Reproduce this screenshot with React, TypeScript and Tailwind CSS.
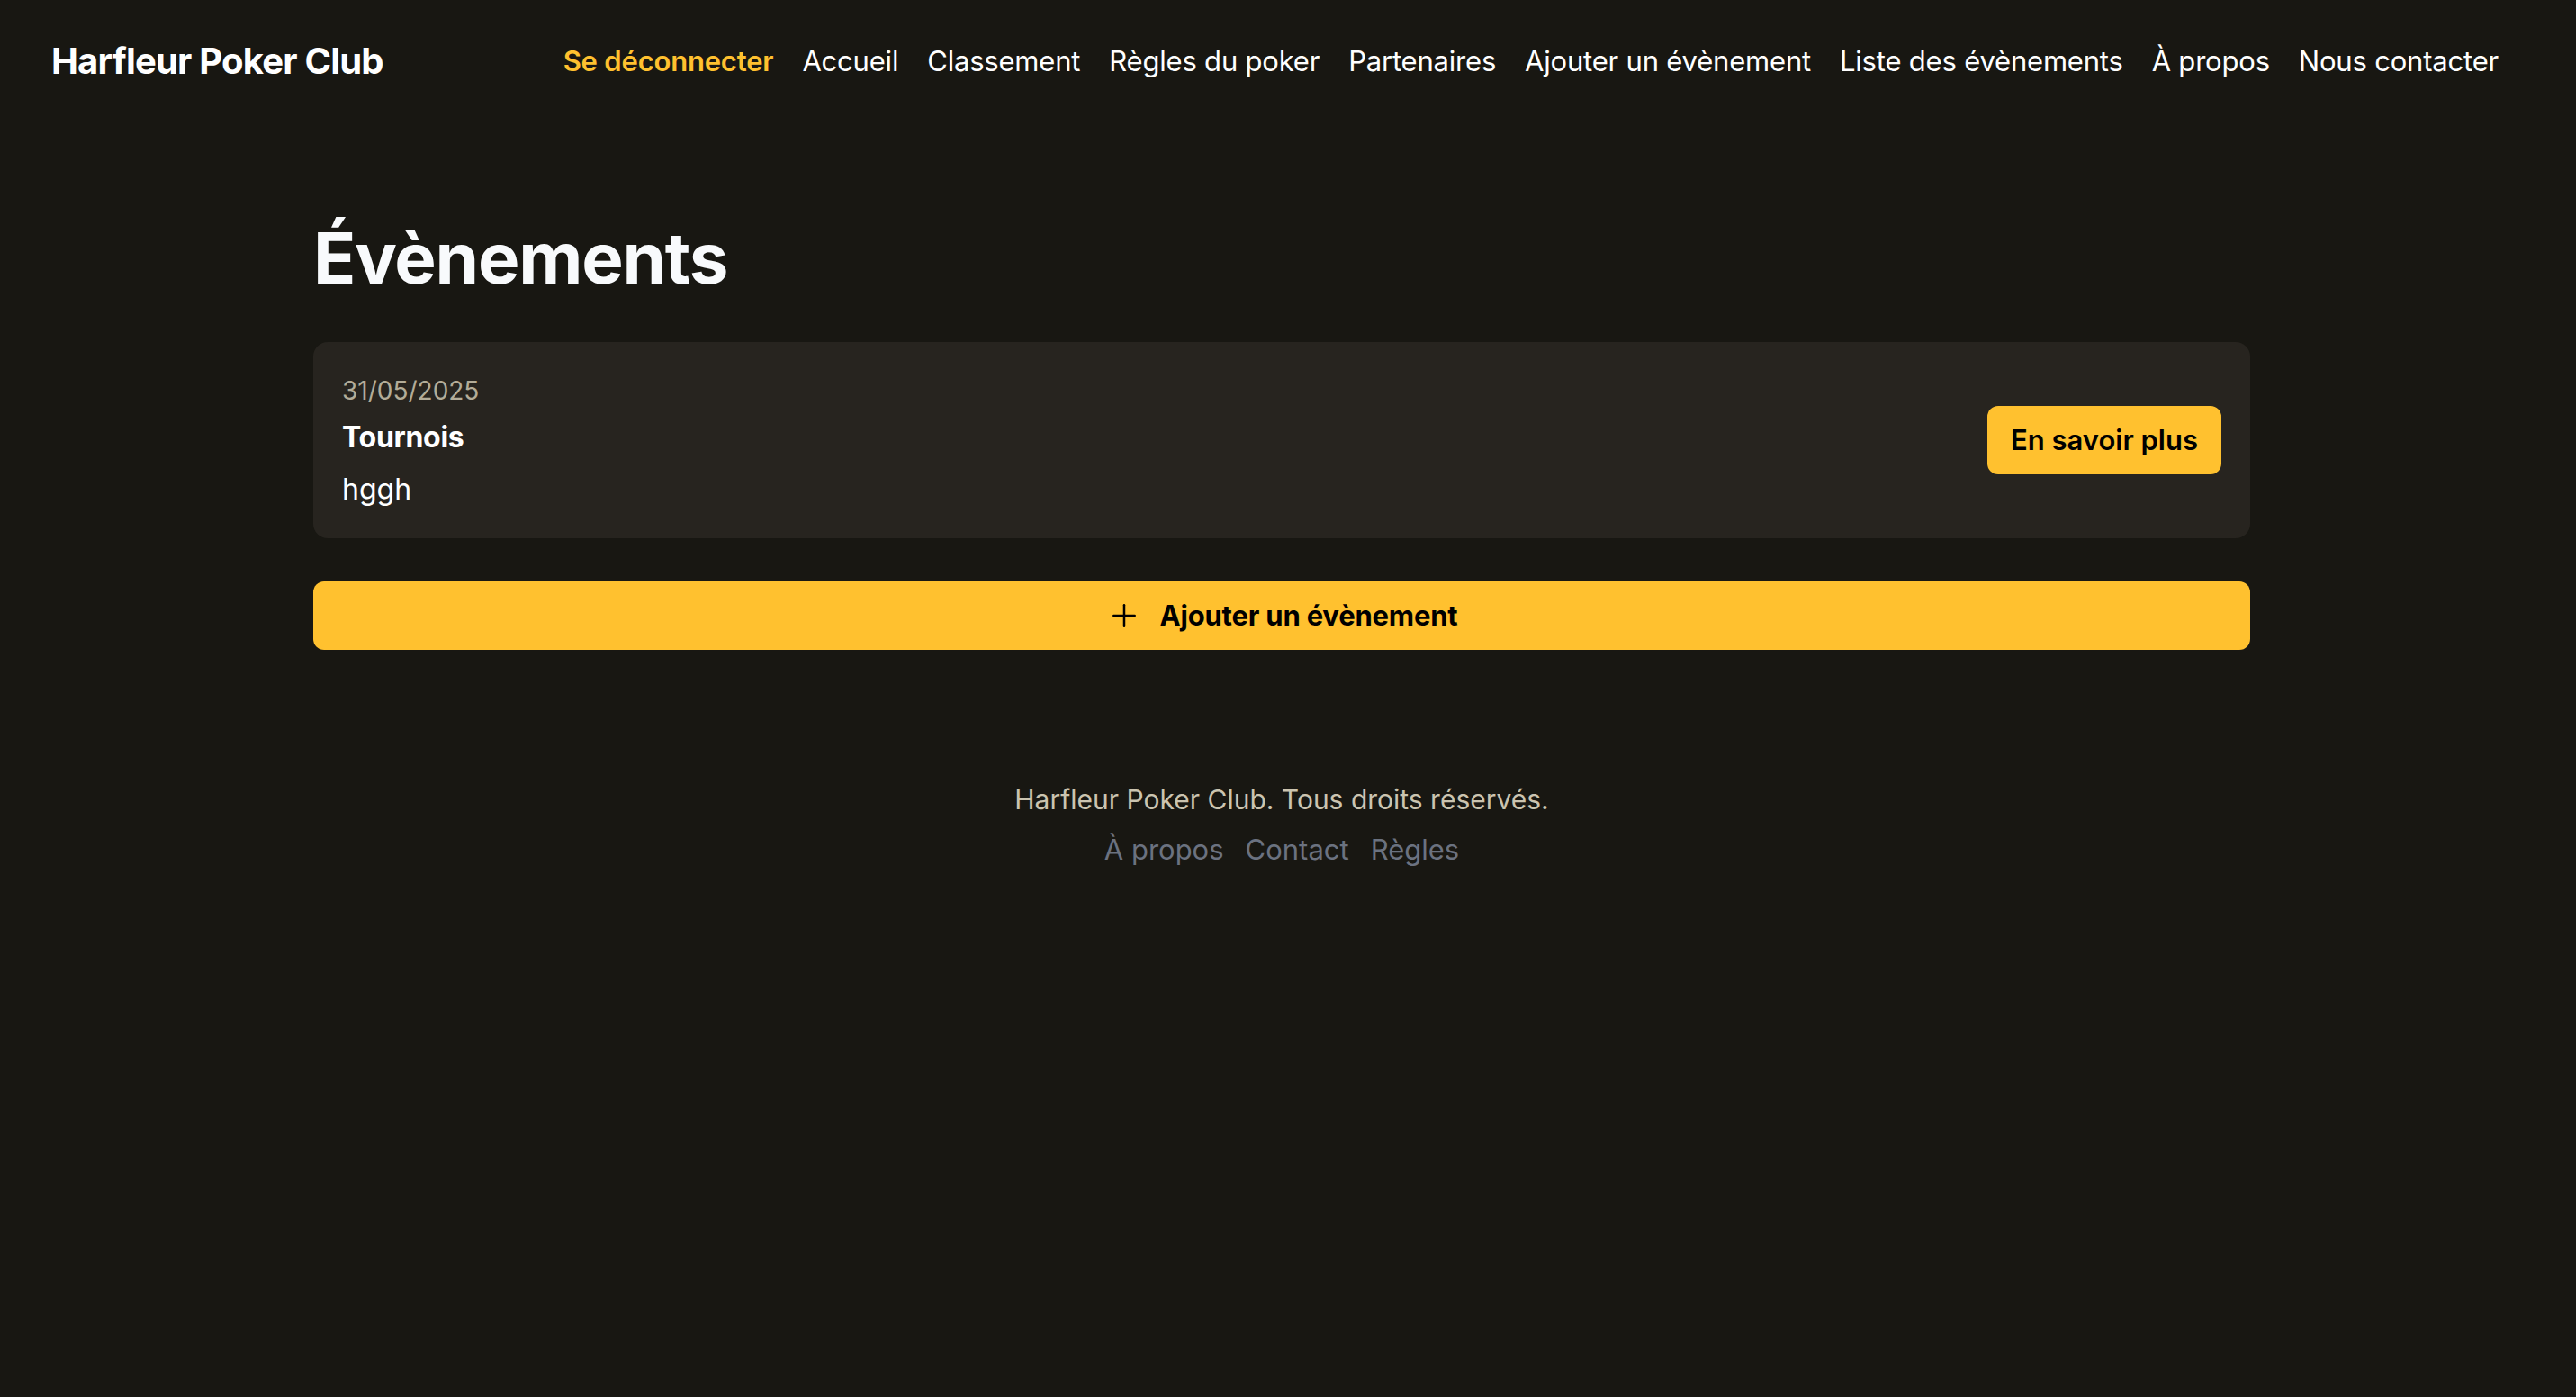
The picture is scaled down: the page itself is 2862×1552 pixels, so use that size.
import { Plus } from 'lucide-react';

const navLinks = [
  'Accueil',
  'Classement',
  'Règles du poker',
  'Partenaires',
  'Ajouter un évènement',
  'Liste des évènements',
  'À propos',
  'Nous contacter',
];

const events = [{ id: 1, date: '31/05/2025', title: 'Tournois', description: 'hggh' }];

export default function App() {
  return (
    <div className="min-h-screen bg-[#181712] text-white font-['Inter','Liberation_Sans',sans-serif]">
      {/* Barre de navigation */}
      <header className="flex h-[136px] items-center justify-between pl-[57px] pr-[86px]">
        <a className="text-[40px] font-bold tracking-[-0.8px] text-white">Harfleur Poker Club</a>
        <nav className="flex items-center gap-8 text-[31px] tracking-[-0.2px]">
          <button className="font-semibold text-[#ffc12f]">Se déconnecter</button>
          {navLinks.map((link) => (
            <a key={link} className="text-white">
              {link}
            </a>
          ))}
        </nav>
      </header>

      <div className="pr-[14px]">
        <main className="mx-auto w-[2152px] pt-[112px]">
          <h1 className="text-[78px] font-bold leading-none tracking-[-1.2px] text-[#f8fafc]">Évènements</h1>

          <div className="mt-[54px] flex flex-col gap-6">
            {events.map((ev) => (
              <div
                key={ev.id}
                className="flex items-center justify-between rounded-2xl bg-[#27241f] px-8 pt-[34px] pb-[30px]"
              >
                <div className="flex flex-col">
                  <p className="text-[28px] leading-[40px] text-[#b3ac98]">{ev.date}</p>
                  <h2 className="mt-2 text-[32px] font-bold leading-[48px] tracking-[-0.3px] text-white">{ev.title}</h2>
                  <p className="mt-2.5 text-[32px] leading-[48px] text-white">{ev.description}</p>
                </div>
                <button className="-mt-1 rounded-xl bg-[#ffc12f] px-[26px] py-3.5 text-[31px] font-semibold leading-[48px] text-black">
                  En savoir plus
                </button>
              </div>
            ))}
          </div>

          <button className="mt-[48px] flex h-[76px] w-full items-center justify-center gap-5 rounded-xl bg-[#ffc12f] text-[31px] font-bold tracking-[-0.2px] text-black">
            <Plus size={40} strokeWidth={1.5} />
            Ajouter un évènement
          </button>

          <footer className="mt-[142px] flex flex-col items-center gap-2 pb-16">
            <p className="text-[30px] leading-[48px] text-[#cbc4b0]">Harfleur Poker Club. Tous droits réservés.</p>
            <div className="flex items-center gap-6 text-[31px] leading-[48px] text-[#6b7280]">
              <a>À propos</a>
              <a>Contact</a>
              <a>Règles</a>
            </div>
          </footer>
        </main>
      </div>
    </div>
  );
}
